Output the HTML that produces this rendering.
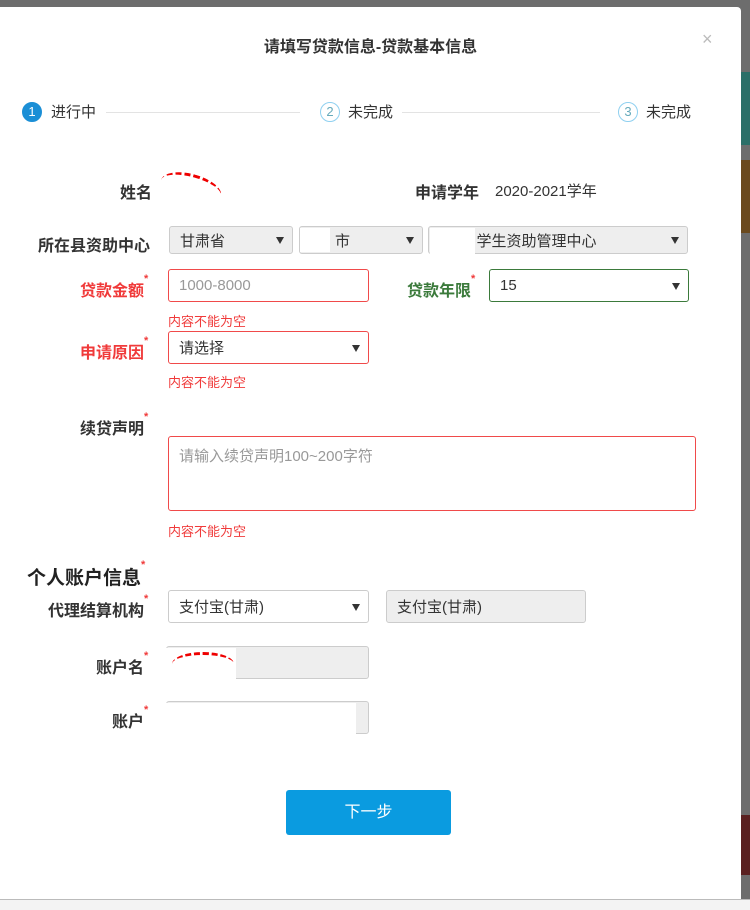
<!DOCTYPE html>
<html><head><meta charset="utf-8"><style>
*{margin:0;padding:0;box-sizing:border-box}
body{width:750px;height:910px;position:relative;overflow:hidden;background:#6d6d6d;font-family:"Liberation Sans","Noto Sans CJK SC",sans-serif;font-size:14px;color:#333}
.a{position:absolute;white-space:nowrap}
#m{position:absolute;left:0;top:7px;width:741px;height:892px;background:#fff;border-radius:0 4px 0 0}
.lb{font-weight:bold;color:#333;font-size:16px}
.red{color:#f03a3a}
.st{color:#f03a3a;font-size:11px;vertical-align:top;position:relative;top:-4px}
.box{position:absolute;border:1px solid #ccc;border-radius:3px;background:#fff;font-size:15px;color:#333;padding-left:10px;display:flex;align-items:center}
.g{background:#eee}
.arr{position:absolute;right:8px;top:50%;margin-top:-3px;width:0;height:0;border-left:4px solid transparent;border-right:4px solid transparent;border-top:7px solid #333}
.err{position:absolute;color:#f03a3a;font-size:13px;left:168px}
.c{position:absolute;width:20px;height:20px;border-radius:50%;font-size:13px;text-align:center;line-height:18px}
.ln{position:absolute;height:1px;background:#e3e3e3;top:112px}
</style></head><body>
<div id="m"></div>
<div class="a" style="left:741px;top:72px;width:9px;height:73px;background:#2b6f68"></div>
<div class="a" style="left:741px;top:160px;width:9px;height:73px;background:#6b4a1e"></div>
<div class="a" style="left:741px;top:815px;width:9px;height:60px;background:#5a2020"></div>
<div class="a" style="left:0;top:899px;width:750px;height:11px;background:#f3f3f3;border-top:1px solid #bbb"></div>

<div class="a" style="left:0;width:741px;top:33px;text-align:center;font-size:16px;font-weight:bold;color:#333">请填写贷款信息-贷款基本信息</div>
<div class="a" style="left:702px;top:29px;font-size:18px;color:#bbb">×</div>

<div class="c" style="left:22px;top:102px;background:#1b8fd6;color:#fff;border:1px solid #1b8fd6">1</div>
<div class="a" style="left:51px;top:101px;font-size:15px">进行中</div>
<div class="ln" style="left:106px;width:194px"></div>
<div class="c" style="left:320px;top:102px;border:1px solid #8fd0f0;color:#6ab">2</div>
<div class="a" style="left:348px;top:101px;font-size:15px">未完成</div>
<div class="ln" style="left:402px;width:198px"></div>
<div class="c" style="left:618px;top:102px;border:1px solid #8fd0f0;color:#6ab">3</div>
<div class="a" style="left:646px;top:101px;font-size:15px">未完成</div>

<div class="a lb" style="left:120px;top:179px">姓名</div>
<div class="a" style="left:160px;top:174px;width:62px;height:28px;border-top:3px dashed #e00;border-radius:50%;transform:rotate(15deg)"></div>
<div class="a lb" style="left:415px;top:179px">申请学年</div>
<div class="a" style="left:495px;top:180px;font-size:15px">2020-2021学年</div>

<div class="a lb" style="left:38px;top:232px">所在县资助中心</div>
<div class="box g" style="left:169px;top:226px;width:124px;height:28px">甘肃省<i class="arr"></i></div>
<div class="box g" style="left:299px;top:226px;width:124px;height:28px">&nbsp;&nbsp;&nbsp;&nbsp;&nbsp;&nbsp;市<i class="arr"></i></div>
<div class="box g" style="left:428px;top:226px;width:260px;height:28px">&nbsp;&nbsp;&nbsp;&nbsp;&nbsp;&nbsp;&nbsp;&nbsp;&nbsp;学生资助管理中心<i class="arr"></i></div>
<div class="a" style="left:300px;top:228px;width:30px;height:24px;background:#fff"></div>
<div class="a" style="left:430px;top:228px;width:45px;height:26px;background:#fff"></div>

<div class="a lb red" style="left:80px;top:277px">贷款金额<span class="st">*</span></div>
<div class="box" style="left:168px;top:269px;width:201px;height:33px;border-color:#f04a4a;color:#999">1000-8000</div>
<div class="a lb" style="left:407px;top:277px;color:#3b7a3b">贷款年限<span class="st">*</span></div>
<div class="box" style="left:489px;top:269px;width:200px;height:33px;border-color:#3b7a3b">15<i class="arr"></i></div>
<div class="err" style="top:311px">内容不能为空</div>

<div class="a lb red" style="left:80px;top:339px">申请原因<span class="st">*</span></div>
<div class="box" style="left:168px;top:331px;width:201px;height:33px;border-color:#f04a4a">请选择<i class="arr"></i></div>
<div class="err" style="top:372px">内容不能为空</div>

<div class="a lb" style="left:80px;top:415px">续贷声明<span class="st">*</span></div>
<div class="box" style="left:168px;top:436px;width:528px;height:75px;border-color:#f04a4a;color:#999;align-items:flex-start;padding-top:8px">请输入续贷声明100~200字符</div>
<div class="err" style="top:521px">内容不能为空</div>

<div class="a" style="left:27px;top:563px;font-size:19px;color:#222;font-weight:bold">个人账户信息<span class="st">*</span></div>
<div class="a lb" style="left:48px;top:597px">代理结算机构<span class="st">*</span></div>
<div class="box" style="left:168px;top:590px;width:201px;height:33px">支付宝(甘肃)<i class="arr"></i></div>
<div class="box g" style="left:386px;top:590px;width:200px;height:33px">支付宝(甘肃)</div>

<div class="a lb" style="left:96px;top:654px">账户名<span class="st">*</span></div>
<div class="box g" style="left:166px;top:646px;width:203px;height:33px"></div>
<div class="a" style="left:166px;top:648px;width:70px;height:34px;background:#fff"></div>
<div class="a" style="left:172px;top:652px;width:62px;height:24px;border-top:3px dashed #e00;border-radius:50%"></div>
<div class="a lb" style="left:112px;top:708px">账户<span class="st">*</span></div>
<div class="box g" style="left:166px;top:701px;width:203px;height:33px"></div>
<div class="a" style="left:166px;top:703px;width:190px;height:31px;background:#fff"></div>

<div class="a" style="left:286px;top:790px;width:165px;height:45px;background:#0a9be0;border-radius:3px;color:#fff;font-size:16px;text-align:center;line-height:45px">下一步</div>
</body></html>
